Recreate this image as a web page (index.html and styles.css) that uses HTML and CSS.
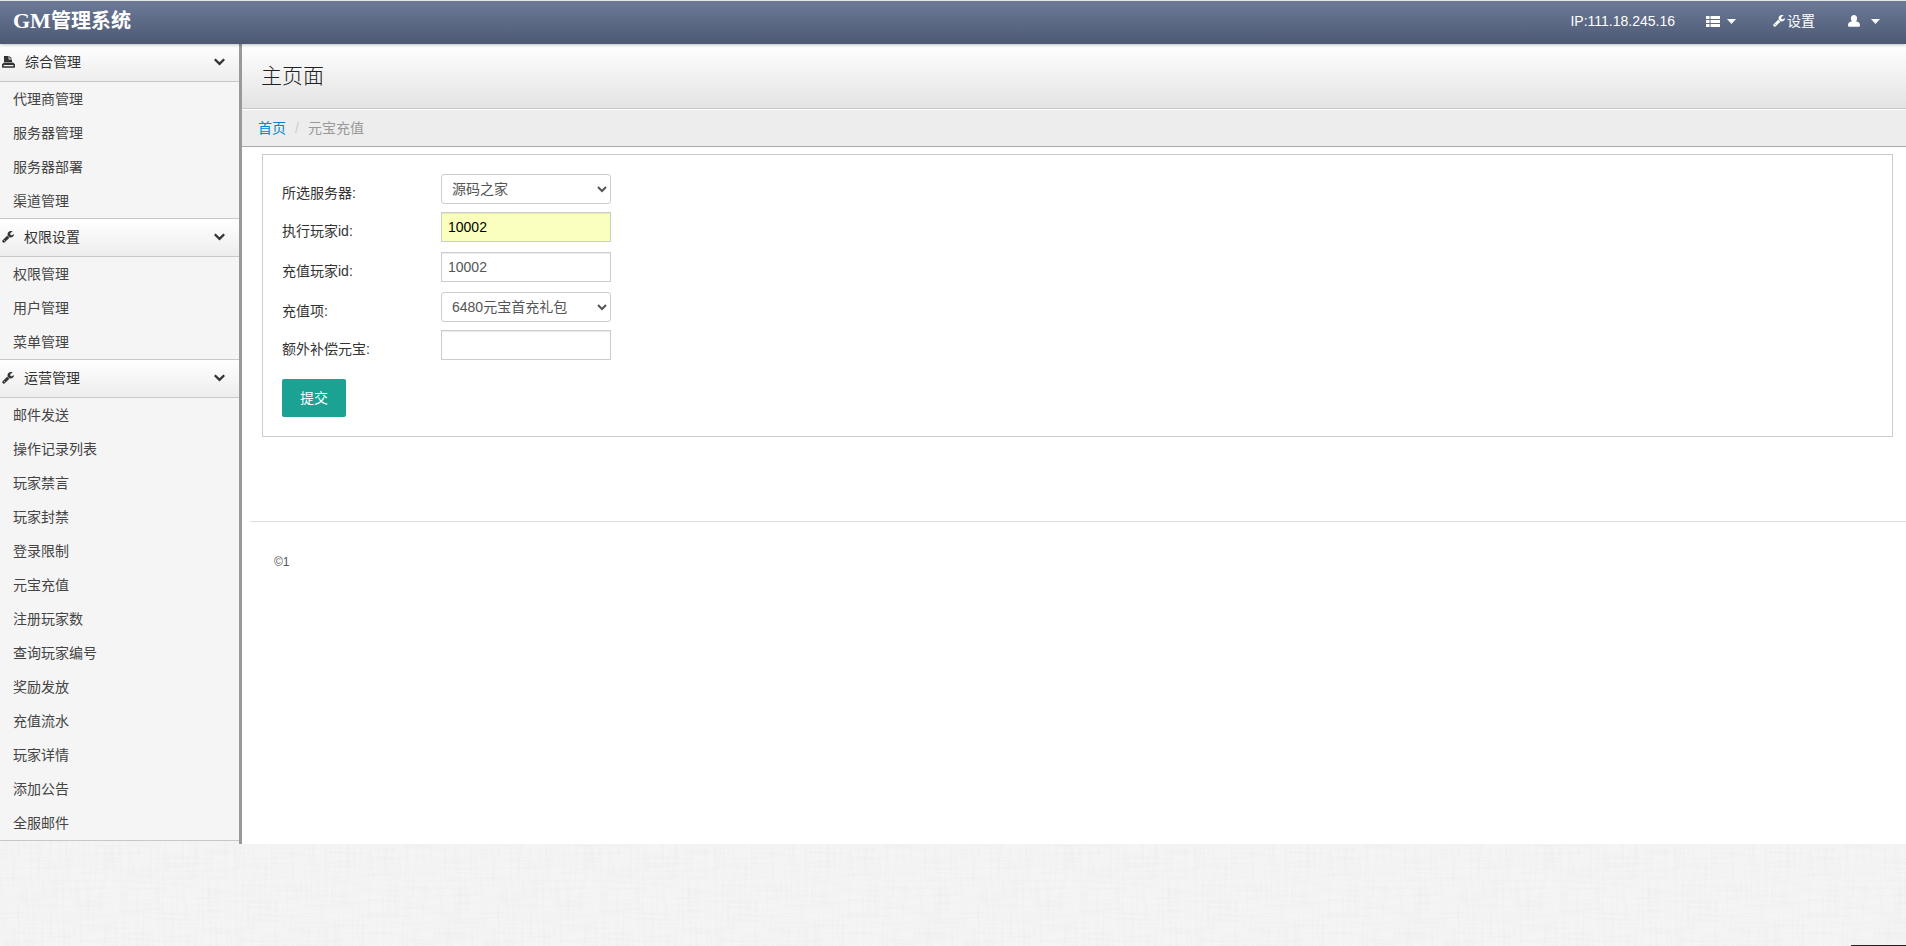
FILE: index.html
```html
<!DOCTYPE html>
<html lang="zh-CN">
<head>
<meta charset="utf-8">
<title>GM管理系统</title>
<link rel="stylesheet" href="styles.css">
</head>
<body>
<svg class="sprite" aria-hidden="true">
  <symbol id="wrench" viewBox="0 0 1664 1664"><path d="M384 1344q0-26-19-45t-45-19-45 19-19 45 19 45 45 19 45-19 19-45zm644-420l-682 682q-37 37-90 37-52 0-91-37L59 1498q-38-36-38-90 0-53 38-91l681-681q39 98 114.500 173.500T1028 924zm634-435q0 39-23 106-47 134-164.500 217.500T1216 896q-185 0-316.500-131.500T768 448t131.500-316.500T1216 0q58 0 121.500 16.500T1445 63q16 11 16 28t-16 28l-293 169v224l193 107q5-3 79-48.500t135.500-81T1630 454q15 0 23.500 10t8.500 25z"/></symbol>
  <symbol id="chevron" viewBox="0 0 11 8"><path d="M0 2 1.600.4 5.500 4.200 9.400.4 11 2 5.500 7.500z"/></symbol>
  <symbol id="caret" viewBox="0 0 9 5"><path d="M0 0h9L4.500 5z"/></symbol>
  <symbol id="list" viewBox="0 0 14 11"><path d="M0 0h3.500v3H0zM4.500 0H14v3H4.500zM0 4h3.500v3H0zM4.500 4H14v3H4.500zM0 8h3.500v3H0zM4.500 8H14v3H4.500z"/></symbol>
  <symbol id="user" viewBox="0 0 12 12"><path d="M6 0c1.900 0 3.100 1.400 3.100 3.200 0 1.200-.5 2.400-1.200 3.100C10.600 6.700 12 8.200 12 10.200c0 1-.6 1.600-1.500 1.600h-9C.6 11.800 0 11.200 0 10.200c0-2 1.400-3.500 4.100-3.900C3.400 5.600 2.900 4.400 2.900 3.200 2.900 1.400 4.100 0 6 0z"/></symbol>
  <symbol id="stamp" viewBox="0 0 13 12"><path d="M2 0h4.600v3.400H10V6H2zM7.400 0 10 2.600H7.400z"/><path fill-rule="evenodd" d="M2 6.500h9L13 8.300V11a.8.8 0 0 1-.8.8H.8A.8.8 0 0 1 0 11V8.300zM1.600 9v1.300h9.800V9z"/></symbol>
</svg>
<header class="navbar">
  <a class="brand" href="#"><span class="brand-latin">GM</span>管理系统</a>
  <nav class="nav">
    <span>IP:111.18.245.16</span>
    <a class="nav-link nav-list" href="#" aria-label="列表"><svg class="i-list"><use href="#list"/></svg><svg class="i-caret"><use href="#caret"/></svg></a>
    <a class="nav-link nav-set" href="#"><svg class="i-wrench"><use href="#wrench"/></svg>设置</a>
    <a class="nav-link nav-user" href="#" aria-label="用户"><svg class="i-user"><use href="#user"/></svg><svg class="i-caret"><use href="#caret"/></svg></a>
  </nav>
</header>
<div class="layout">
  <aside class="sidebar">
    <section class="group">
      <a class="group-head" href="#"><svg class="i-stamp"><use href="#stamp"/></svg><span class="group-name">综合管理</span><svg class="i-chevron"><use href="#chevron"/></svg></a>
      <ul class="menu">
        <li><a href="#">代理商管理</a></li>
        <li><a href="#">服务器管理</a></li>
        <li><a href="#">服务器部署</a></li>
        <li><a href="#">渠道管理</a></li>
      </ul>
    </section>
    <section class="group">
      <a class="group-head" href="#"><svg class="i-wrench"><use href="#wrench"/></svg><span class="group-name">权限设置</span><svg class="i-chevron"><use href="#chevron"/></svg></a>
      <ul class="menu">
        <li><a href="#">权限管理</a></li>
        <li><a href="#">用户管理</a></li>
        <li><a href="#">菜单管理</a></li>
      </ul>
    </section>
    <section class="group">
      <a class="group-head" href="#"><svg class="i-wrench"><use href="#wrench"/></svg><span class="group-name">运营管理</span><svg class="i-chevron"><use href="#chevron"/></svg></a>
      <ul class="menu">
        <li><a href="#">邮件发送</a></li>
        <li><a href="#">操作记录列表</a></li>
        <li><a href="#">玩家禁言</a></li>
        <li><a href="#">玩家封禁</a></li>
        <li><a href="#">登录限制</a></li>
        <li><a href="#">元宝充值</a></li>
        <li><a href="#">注册玩家数</a></li>
        <li><a href="#">查询玩家编号</a></li>
        <li><a href="#">奖励发放</a></li>
        <li><a href="#">充值流水</a></li>
        <li><a href="#">玩家详情</a></li>
        <li><a href="#">添加公告</a></li>
        <li><a href="#">全服邮件</a></li>
      </ul>
    </section>
  </aside>
  <main class="content">
    <div class="page-head"><h1 class="page-title">主页面</h1></div>
    <nav class="breadcrumb"><a href="#">首页</a><span class="divider">/</span><span class="current">元宝充值</span></nav>
    <form class="panel">
      <div class="row row-select"><label for="server">所选服务器:</label><select id="server"><option>源码之家</option></select></div>
      <div class="row"><label for="actor">执行玩家id:</label><input class="autofilled" id="actor" type="text" value="10002"></div>
      <div class="row"><label for="target">充值玩家id:</label><input id="target" type="text" value="10002"></div>
      <div class="row row-select"><label for="item">充值项:</label><select id="item"><option>6480元宝首充礼包</option></select></div>
      <div class="row"><label for="extra">额外补偿元宝:</label><input id="extra" type="text"></div>
      <button class="submit" type="button">提交</button>
    </form>
    <footer class="footer">©1</footer>
  </main>
</div>
<div class="status-edge"></div>
</body>
</html>
```
FILE: styles.css
```css
* { box-sizing: border-box; }

body {
  margin: 0;
  min-height: 100vh;
  font: 14px/20px "Liberation Sans", "Noto Sans CJK SC", sans-serif;
  color: #333;
  background: #f5f5f5 url("data:image/svg+xml,%3Csvg xmlns='http://www.w3.org/2000/svg' width='480' height='480'%3E%3Cfilter id='h' x='0' y='0' width='1' height='1'%3E%3CfeTurbulence type='fractalNoise' baseFrequency='.025 .4' numOctaves='2' seed='3' stitchTiles='stitch'/%3E%3CfeColorMatrix values='0 0 0 0 .7 0 0 0 0 .7 0 0 0 0 .7 .35 0 0 0 -.14'/%3E%3C/filter%3E%3Cfilter id='v' x='0' y='0' width='1' height='1'%3E%3CfeTurbulence type='fractalNoise' baseFrequency='.4 .025' numOctaves='2' seed='8' stitchTiles='stitch'/%3E%3CfeColorMatrix values='0 0 0 0 .7 0 0 0 0 .7 0 0 0 0 .7 .35 0 0 0 -.14'/%3E%3C/filter%3E%3Crect width='480' height='480' filter='url(%23h)'/%3E%3Crect width='480' height='480' filter='url(%23v)'/%3E%3C/svg%3E");
}

a { color: inherit; text-decoration: none; }
svg { flex: none; fill: currentColor; }
.sprite { display: none; }

.i-wrench { width: 12px; height: 12px; }
.i-stamp { width: 13px; height: 12px; }
.i-chevron { width: 11px; height: 8px; }
.i-caret { width: 9px; height: 5px; }
.i-list { width: 14px; height: 11px; }
.i-user { width: 12px; height: 12px; }

.navbar {
  position: relative;
  display: flex;
  align-items: center;
  justify-content: space-between;
  height: 44px;
  padding: 0 26px 3px 13px;
  border-top: 1px solid #e6e6e6;
  color: #fff;
  background: linear-gradient(#6c7a98, #4d5973);
  box-shadow: 0 1px 3px rgba(0, 0, 0, .25);
}
.brand { font: bold 20px/30px "Liberation Serif", "Noto Sans CJK SC", serif; }
.brand-latin { font-size: 22px; }
.nav { display: flex; align-items: center; }
.nav-link { display: flex; align-items: center; }
.nav-list { gap: 7px; margin-left: 31px; }
.nav-set { gap: 2px; margin-left: 37px; }
.nav-user { gap: 11px; margin-left: 33px; }

.layout { display: flex; align-items: stretch; }

.sidebar {
  width: 242px;
  flex: none;
  padding-bottom: 3px;
  border-right: 3px solid #999;
}
.group { border-bottom: 1px solid #c8c8c8; background: #f5f5f5; }
.group-head {
  display: flex;
  align-items: center;
  gap: 10px;
  height: 38px;
  padding: 0 14px 2px 2px;
  border-bottom: 1px solid #c8c8c8;
  background: linear-gradient(#fff, #ededed);
}
.group-name { flex: 1; }
.menu { margin: 0; padding: 0; list-style: none; }
.menu a { display: block; padding: 7px 13px; color: #444; }

.content { flex: 1; min-width: 0; background: #fff; }
.page-head {
  padding: 17px 19px;
  border-bottom: 1px solid #c8c8c8;
  background: linear-gradient(#fff, #e3e3e3);
}
.page-title { margin: 0; color: #222; font-size: 21px; line-height: 30px; font-weight: 300; }
.breadcrumb {
  display: flex;
  gap: 9px;
  padding: 8px 16px;
  border-top: 1px solid #fff;
  border-bottom: 1px solid #aaa;
  background: #ededed;
}
.breadcrumb a { color: #0088cc; }
.divider { color: #ccc; }
.current { color: #999; }

.panel {
  margin: 7px 13px 84px 20px;
  padding: 19px;
  border: 1px solid #ccc;
}
.row { display: flex; margin-bottom: 10px; }
.row-select { margin-bottom: 8px; }
.row label { width: 159px; padding-top: 9px; line-height: 20px; }
.row input, .row select {
  width: 170px;
  height: 30px;
  padding: 4px 6px;
  border: 1px solid #ccc;
  font: inherit;
  color: #555;
  background: #fff;
}
.row input { box-shadow: inset 0 1px 1px rgba(0, 0, 0, .08); }
.row select { border-radius: 3px; }
.row .autofilled { color: #000; background: #faffbd; }
.submit {
  height: 38px;
  margin-top: 9px;
  padding: 0 18px;
  border: 0;
  border-radius: 2px;
  font: inherit;
  color: #fff;
  background: #1ba293;
}
.footer {
  margin-left: 8px;
  padding: 30px 24px;
  border-top: 1px solid #e0e0e0;
  font-size: 12px;
  color: #555;
}

.status-edge {
  position: fixed;
  right: 0;
  bottom: 0;
  width: 55px;
  height: 1px;
  background: #222;
}
```
